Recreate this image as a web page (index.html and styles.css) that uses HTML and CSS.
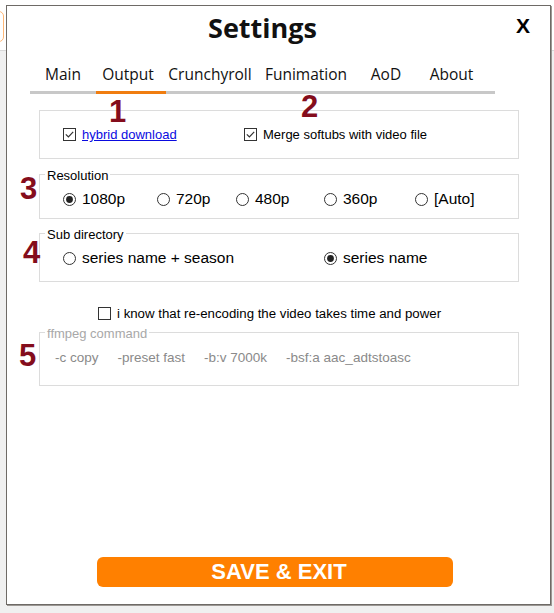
FILE: index.html
```html
<!DOCTYPE html>
<html>
<head>
<meta charset="utf-8">
<link rel="stylesheet" href="styles.css">
</head>
<body>
<div class="behind"></div>
<div class="dialog">
  <header class="head">
    <h1 class="title">Settings</h1>
    <span class="close">X</span>
  </header>
  <nav class="tabs">
    <span class="tab t-main">Main</span>
    <span class="tab t-out active">Output</span>
    <span class="tab t-cr">Crunchyroll</span>
    <span class="tab t-fun">Funimation</span>
    <span class="tab t-aod">AoD</span>
    <span class="tab t-about">About</span>
  </nav>

  <div class="box opts">
    <label class="opt">
      <svg class="cb" width="13" height="13" viewBox="0 0 13 13"><rect x="0.5" y="0.5" width="12" height="12" fill="#fff" stroke="#333"/><path d="M2.8 6.4l2.6 2.6 4.8-5.2" fill="none" stroke="#333" stroke-width="1.2"/></svg>
      <a class="link">hybrid download</a>
    </label>
    <label class="opt">
      <svg class="cb" width="13" height="13" viewBox="0 0 13 13"><rect x="0.5" y="0.5" width="12" height="12" fill="#fff" stroke="#333"/><path d="M2.8 6.4l2.6 2.6 4.8-5.2" fill="none" stroke="#333" stroke-width="1.2"/></svg>
      <span>Merge softubs with video file</span>
    </label>
  </div>

  <fieldset class="group res">
    <legend>Resolution</legend>
    <div class="radios res-row">
      <label class="radio"><svg class="rb" width="13" height="13" viewBox="0 0 13 13"><circle cx="6.5" cy="6.5" r="6" fill="#fff" stroke="#333"/><circle cx="6.5" cy="6.5" r="3.4" fill="#222"/></svg>1080p</label>
      <label class="radio"><svg class="rb" width="13" height="13" viewBox="0 0 13 13"><circle cx="6.5" cy="6.5" r="6" fill="#fff" stroke="#333"/></svg>720p</label>
      <label class="radio"><svg class="rb" width="13" height="13" viewBox="0 0 13 13"><circle cx="6.5" cy="6.5" r="6" fill="#fff" stroke="#333"/></svg>480p</label>
      <label class="radio"><svg class="rb" width="13" height="13" viewBox="0 0 13 13"><circle cx="6.5" cy="6.5" r="6" fill="#fff" stroke="#333"/></svg>360p</label>
      <label class="radio"><svg class="rb" width="13" height="13" viewBox="0 0 13 13"><circle cx="6.5" cy="6.5" r="6" fill="#fff" stroke="#333"/></svg>[Auto]</label>
    </div>
  </fieldset>

  <fieldset class="group sub">
    <legend>Sub directory</legend>
    <div class="radios sub-row">
      <label class="radio"><svg class="rb" width="13" height="13" viewBox="0 0 13 13"><circle cx="6.5" cy="6.5" r="6" fill="#fff" stroke="#333"/></svg>series name + season</label>
      <label class="radio"><svg class="rb" width="13" height="13" viewBox="0 0 13 13"><circle cx="6.5" cy="6.5" r="6" fill="#fff" stroke="#333"/><circle cx="6.5" cy="6.5" r="3.4" fill="#222"/></svg>series name</label>
    </div>
  </fieldset>

  <label class="opt agree">
    <svg class="cb" width="13" height="13" viewBox="0 0 13 13"><rect x="0.5" y="0.5" width="12" height="12" fill="#fff" stroke="#333"/></svg>
    <span>i know that re-encoding the video takes time and power</span>
  </label>

  <fieldset class="group ff">
    <legend>ffmpeg command</legend>
    <div class="ff-row">
      <span>-c copy</span>
      <span>-preset fast</span>
      <span>-b:v 7000k</span>
      <span>-bsf:a aac_adtstoasc</span>
    </div>
  </fieldset>

  <button class="save">SAVE &amp; EXIT</button>

  <span class="num n1">1</span>
  <span class="num n2">2</span>
  <span class="num n3">3</span>
  <span class="num n4">4</span>
  <span class="num n5">5</span>
</div>
</body>
</html>
```
FILE: styles.css
```css
html, body {
  margin: 0;
  padding: 0;
}
body {
  width: 554px;
  height: 613px;
  overflow: hidden;
  position: relative;
  font-family: "Liberation Sans", Arial, sans-serif;
  background: linear-gradient(#ffffff 0 50px, #d9d9d9 50px 51px, #f0f0f0 51px);
}
.behind {
  position: absolute;
  left: -20px;
  top: 11px;
  width: 22px;
  height: 29px;
  border: 1px solid #ffb877;
  border-radius: 5px;
  background: #fff;
}
.dialog {
  position: relative;
  box-sizing: border-box;
  margin: 5px 3px 0 6px;
  height: 600px;
  border: 1px solid #6e6a66;
  box-shadow: 1px 1px 0 #9c9894;
  background: #fff;
  display: flex;
  flex-direction: column;
}
.head {
  height: 42px;
  display: flex;
  align-items: center;
  justify-content: center;
  position: relative;
  padding-right: 32px;
}
.title {
  margin: 0;
  font-family: "Open Sans", "Noto Sans", sans-serif;
  font-weight: 700;
  font-size: 27px;
  line-height: 1;
  color: #111;
}
.close {
  position: absolute;
  right: 20px;
  top: 9px;
  font-family: "Liberation Sans", Arial, sans-serif;
  font-weight: 700;
  font-size: 21px;
  line-height: 1;
  color: #000;
}
.tabs {
  display: flex;
  margin-left: 23px;
  width: 465px;
  padding-top: 16px;
}
.tab {
  box-sizing: border-box;
  font-family: "Open Sans", "Noto Sans", sans-serif;
  font-size: 15.5px;
  line-height: 20px;
  color: #111;
  text-align: center;
  padding-bottom: 7px;
  border-bottom: 3px solid #c8c8c8;
}
.tab.active { border-bottom-color: #f07d10; }
.t-main { width: 66px; }
.t-out { width: 70px; padding-right: 6px; }
.t-cr { width: 88px; }
.t-fun { width: 104px; }
.t-aod { width: 56px; }
.t-about { width: 81px; padding-right: 6px; }

.box, .group {
  box-sizing: border-box;
  margin-left: 32px;
  width: 480px;
  border: 1px solid #dcdcdc;
}
.opts {
  margin-top: 16px;
  padding: 17px 0 17px 23px;
  display: grid;
  grid-template-columns: 181px auto;
}
.opt {
  display: flex;
  align-items: center;
  gap: 6px;
  font-size: 13px;
  line-height: 13px;
  color: #000;
}
.cb, .rb { flex: none; display: block; }
.link {
  color: #0a0adf;
  text-decoration: underline;
}
.group {
  padding: 0 0 0 23px;
  min-width: 0;
}
.group legend {
  margin-left: -18px;
  padding: 4px 2px 0;
  font-size: 13px;
  line-height: 14px;
  color: #000;
}
.radios {
  display: grid;
  align-items: center;
}
.radio {
  display: flex;
  align-items: center;
  gap: 6px;
  font-size: 15.5px;
  line-height: 16px;
  color: #000;
}
.res {
  margin-top: 6px;
  padding-top: 8px;
  padding-bottom: 11px;
}
.res-row { grid-template-columns: 94px 79px 88px 91px auto; }
.sub {
  margin-top: 5px;
  padding-top: 8px;
  padding-bottom: 15px;
}
.sub-row { grid-template-columns: 261px auto; }
.agree {
  margin-top: 25px;
  margin-left: 91px;
  align-self: flex-start;
  font-size: 13.25px;
}
.ff {
  margin-top: 3px;
  padding: 9px 0 19px 15px;
}
.ff legend {
  margin-left: -10px;
  color: #a8a8a8;
}
.ff-row {
  display: flex;
  gap: 19px;
  font-size: 13.5px;
  line-height: 16px;
  color: #8a8a8a;
}
.save {
  box-sizing: border-box;
  margin: auto 0 17px 90px;
  width: 356px;
  height: 30px;
  border: none;
  border-radius: 6px;
  background: #ff8000;
  color: #fff;
  font-family: "Liberation Sans", Arial, sans-serif;
  font-weight: 700;
  font-size: 22px;
  line-height: 30px;
  padding: 0 0 0 8px;
  text-align: center;
}
.num {
  position: absolute;
  font-family: "Liberation Sans", Arial, sans-serif;
  font-weight: 700;
  font-size: 31px;
  line-height: 1;
  color: #840d1c;
}
.n1 { left: 102px; top: 90px; }
.n2 { left: 294px; top: 85px; }
.n3 { left: 13px; top: 167px; }
.n4 { left: 16px; top: 231px; }
.n5 { left: 12px; top: 334px; }
```
